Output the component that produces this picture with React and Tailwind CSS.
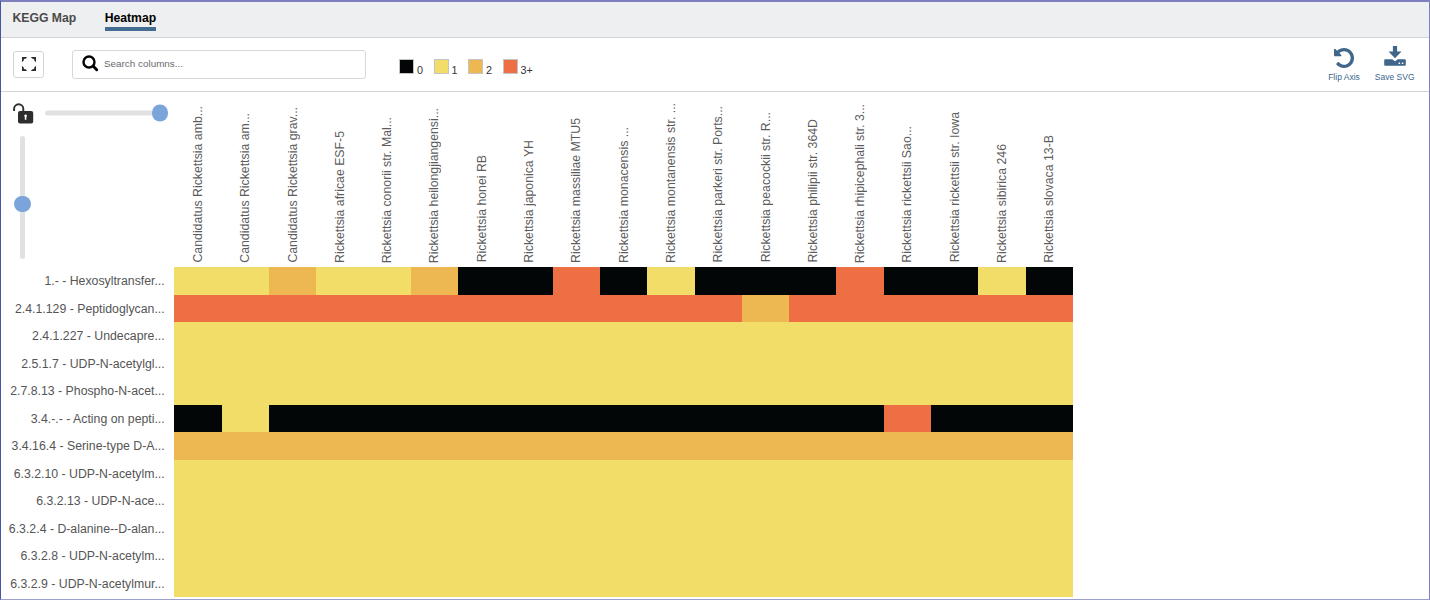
import React from 'react';

const COLORS = ['bg-[#020606]', 'bg-[#f3dd69]', 'bg-[#edb752]', 'bg-[#ef6f45]'];

const LEGEND = ['0', '1', '2', '3+'];

const COLUMNS = [
  'Candidatus Rickettsia amb...',
  'Candidatus Rickettsia am...',
  'Candidatus Rickettsia grav...',
  'Rickettsia africae ESF-5',
  'Rickettsia conorii str. Mal...',
  'Rickettsia heilongjiangensi...',
  'Rickettsia honei RB',
  'Rickettsia japonica YH',
  'Rickettsia massiliae MTU5',
  'Rickettsia monacensis ...',
  'Rickettsia montanensis str. ...',
  'Rickettsia parkeri str. Ports...',
  'Rickettsia peacockii str. R...',
  'Rickettsia philipii str. 364D',
  'Rickettsia rhipicephali str. 3...',
  'Rickettsia rickettsii Sao...',
  'Rickettsia rickettsii str. Iowa',
  'Rickettsia sibirica 246',
  'Rickettsia slovaca 13-B',
];

const ALL_ONE = '1111111111111111111';

// One digit per column: 0, 1, 2 or 3 (three or more)
const ROWS = [
  ['1.- - Hexosyltransfer...', '1121120030100030010'],
  ['2.4.1.129 - Peptidoglycan...', '3333333333332333333'],
  ['2.4.1.227 - Undecapre...', ALL_ONE],
  ['2.5.1.7 - UDP-N-acetylgl...', ALL_ONE],
  ['2.7.8.13 - Phospho-N-acet...', ALL_ONE],
  ['3.4.-.- - Acting on pepti...', '0100000000000003000'],
  ['3.4.16.4 - Serine-type D-A...', '2222222222222222222'],
  ['6.3.2.10 - UDP-N-acetylm...', ALL_ONE],
  ['6.3.2.13 - UDP-N-ace...', ALL_ONE],
  ['6.3.2.4 - D-alanine--D-alan...', ALL_ONE],
  ['6.3.2.8 - UDP-N-acetylm...', ALL_ONE],
  ['6.3.2.9 - UDP-N-acetylmur...', ALL_ONE],
];

function ExpandIcon() {
  return (
    <svg className="h-[14px] w-[14px]" viewBox="0 0 14 14" fill="#2e2e2e">
      <path d="M0 0h5.2L3.6 1.7 2 2 1.7 3.6 0 5.2zM14 0v5.2l-1.7-1.6L12 2l-1.6-.3L8.8 0zM0 14V8.8l1.7 1.6L2 12l1.6.3L5.2 14zM14 14H8.8l1.6-1.7L12 12l.3-1.6L14 8.8z" />
    </svg>
  );
}

function SearchIcon() {
  return (
    <svg className="h-[17px] w-[17px] -translate-y-px" viewBox="0 0 17 17" fill="none" stroke="#000">
      <circle cx="7" cy="7" r="5.5" strokeWidth="2.4" />
      <path d="M11.3 11.3l3.4 3.4" strokeWidth="2.9" strokeLinecap="round" />
    </svg>
  );
}

function UndoIcon() {
  return (
    <svg className="h-[20px] w-[20px]" viewBox="0 128 1536 1536" fill="#40668c">
      <path d="M1536 896q0 156-61 298t-164 245-245 164-298 61q-172 0-327-72.5t-264-204.5q-7-10-6.5-22.5t8.5-20.5l137-138q10-9 25-9 16 2 23 12 73 95 179 147t225 52q104 0 198.5-40.5t163.5-109.5 109.5-163.5 40.5-198.5-40.5-198.5-109.5-163.5-163.5-109.5-198.5-40.5q-98 0-188 35.5t-160 101.5l137 138q31 30 14 69-17 40-59 40h-448q-26 0-45-19t-19-45v-448q0-42 40-59 39-17 69 14l130 129q107-101 244.5-156.5t284.5-55.5q156 0 298 61t245 164 164 245 61 298z" />
    </svg>
  );
}

function DownloadIcon() {
  return (
    <svg className="h-[20px] w-[22px]" viewBox="0 0 22 20" fill="#40668c">
      <path d="M8.9 0h4.2v5.6h4.4L11 12.2 4.5 5.6h4.4z" />
      <path
        fillRule="evenodd"
        d="M1.2 13.2h7l2.8 2 2.8-2h7q1 0 1 1v4.6q0 1-1 1H1.2q-1 0-1-1v-4.6q0-1 1-1zM14.6 16.4v1.5h1.5v-1.5zM17.8 16.4v1.5h1.5v-1.5z"
      />
    </svg>
  );
}

function UnlockIcon() {
  return (
    <svg className="h-[21px] w-[21px]" viewBox="0 0 21 21">
      <path d="M1.1 8V5.8a4.6 4.6 0 0 1 9.2 0v2.9" fill="none" stroke="#2e2e2e" strokeWidth="1.9" />
      <rect x="5" y="8" width="15.2" height="12.6" rx="2" fill="#2e2e2e" />
      <path d="M12.6 11.4a1.4 1.4 0 0 1 .8 2.5v2.8h-1.6v-2.8a1.4 1.4 0 0 1 .8-2.5z" fill="#fff" />
    </svg>
  );
}

function Tabs() {
  return (
    <nav className="flex h-9 shrink-0 gap-[28.5px] border-b border-[#d2d3d4] bg-[#eeeff1] pl-[11.5px] text-[12.2px] leading-[16px] font-bold">
      <span className="mt-2 h-[20px] text-[#4a4a4a]">KEGG Map</span>
      <span className="mt-2 h-[21px] border-b-4 border-[#446c92] text-black">Heatmap</span>
    </nav>
  );
}

function Toolbar() {
  return (
    <div className="flex h-[54px] shrink-0 items-start border-b border-[#d6d6d6]">
      <button className="mt-[13px] ml-[12px] flex h-[27px] w-[31px] items-center justify-center rounded-[3px] border border-[#d4d4d4] pb-[2px]">
        <ExpandIcon />
      </button>
      <div className="mt-3 ml-[28px] flex h-[29px] w-[294px] items-center rounded-[3px] border border-[#d8d8d8] pl-[9px]">
        <SearchIcon />
        <span className="ml-[5px] text-[9.9px] text-[#6a6a6a]">Search columns...</span>
      </div>
      <div className="mt-[21px] ml-[33px] flex">
        {LEGEND.map((label, i) => (
          <div key={label} className="flex w-[34.5px] text-[10.8px] leading-[14px] text-[#333]">
            <span className={`h-[15px] w-[15px] shrink-0 border border-[#c4c4c4] ${COLORS[i]}`} />
            <span className="mt-[4px] ml-[3px]">{label}</span>
          </div>
        ))}
      </div>
      <div className="mr-[14.5px] ml-auto flex gap-[15px] text-[8.5px] leading-[10px] text-[#40668c]">
        <div className="mt-[10px] flex flex-col items-center gap-[4px]">
          <UndoIcon />
          <span>Flip Axis</span>
        </div>
        <div className="mt-[8px] flex flex-col items-center gap-[6px]">
          <DownloadIcon />
          <span>Save SVG</span>
        </div>
      </div>
    </div>
  );
}

function ZoomControls() {
  return (
    <div className="w-[173.3px] shrink-0 pl-[11.5px]">
      <div className="flex h-[21px] items-center">
        <UnlockIcon />
        <div className="ml-[11.5px] flex h-[5px] w-[123px] -translate-y-[0.5px] items-center justify-end rounded-full bg-[#e0e2e2]">
          <span className="h-[16.5px] w-[16.5px] shrink-0 rounded-full bg-[#7ba5da]" />
        </div>
      </div>
      <div className="mt-[11.5px] ml-[7.5px] flex h-[123px] w-[5px] flex-col items-center rounded-full bg-[#e0e2e2] pt-[60px]">
        <span className="h-[16.5px] w-[16.5px] shrink-0 rounded-full bg-[#7ba5da]" />
      </div>
    </div>
  );
}

export default function App() {
  return (
    <div className="h-[605px] w-[1430px] bg-white font-['Liberation_Sans',Arial,sans-serif]">
      <div className="flex h-[600px] flex-col overflow-hidden border border-t-2 border-[#7d80bd] border-b-[#9d9fce] border-l-[#4654a8]">
        <Tabs />
        <Toolbar />
        <div className="flex h-[175.3px] shrink-0 pt-[11px]">
          <ZoomControls />
          <div className="flex pb-[4.5px] text-[12.3px] leading-[14px] text-[#5c5c5c]">
            {COLUMNS.map((name) => (
              <div key={name} className="flex w-[47.3px] items-end justify-center">
                <span className="rotate-180 whitespace-nowrap [writing-mode:vertical-rl]">{name}</span>
              </div>
            ))}
          </div>
        </div>
        {ROWS.map(([name, values]) => (
          <div key={name} className="flex h-[27.5px] shrink-0">
            <div className="w-[173.3px] shrink-0 pr-[9.6px] text-right text-[12.3px] leading-[28.5px] whitespace-nowrap text-[#555]">
              {name}
            </div>
            {values.split('').map((v, i) => (
              <div key={i} className={`w-[47.3px] shrink-0 ${COLORS[Number(v)]}`} />
            ))}
          </div>
        ))}
      </div>
    </div>
  );
}
